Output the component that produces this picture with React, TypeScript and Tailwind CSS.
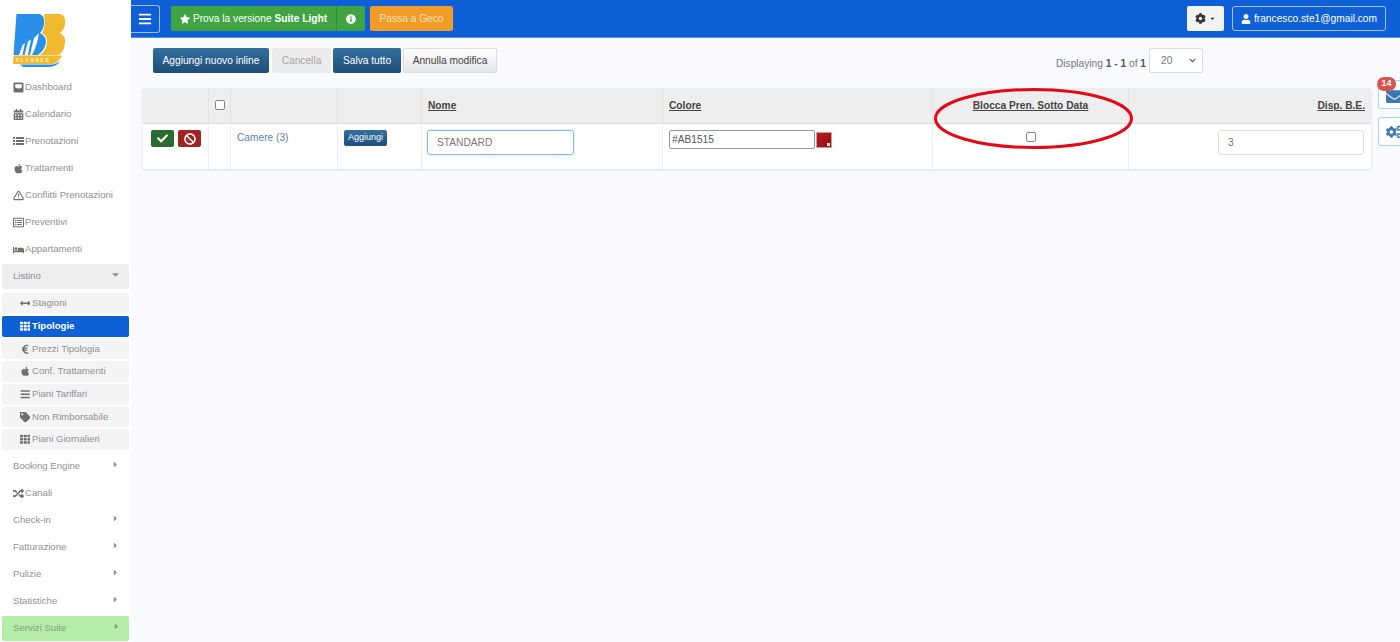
import { ReactNode } from "react"
import {
  FaApple, FaBan, FaBars, FaBed, FaCaretDown, FaCaretRight, FaCalendarAlt, FaCheck, FaChevronDown, FaCog, FaCogs,
  FaEnvelope, FaEuroSign, FaInfoCircle, FaRandom, FaRegListAlt, FaStar, FaTag, FaTh, FaUser, FaArrowsAltH,
} from "react-icons/fa"
import { FiAlertTriangle } from "react-icons/fi"

function Logo() {
  return (
    <svg width="58" height="58" viewBox="0 0 58 58" className="ml-[11px] overflow-visible">
      <path d="M33 2 L49 2 Q55 3 54 11 Q54 17 49 21 Q55 24 54 31 Q53 41 47 43 L29 43 Q36 38 36 29 Q36 24 31 21 Q35 16 33 2 Z" fill="#efba2f" />
      <path d="M5.5 2 L28 2 Q34 3 33 11 Q33 17 29 21 Q35 24 35 30 Q34 38 27 43 L2.5 43 Z" fill="#2a8fe8" />
      <path d="M8 43 L11.5 33 L14 31 L11.5 43 Z M13.5 43 L17 29.5 L20 27.5 L17 43 Z M19 43 L23 26 L28 21 Q26 34 21 43 Z" fill="#fff" />
      <path d="M2.5 43.5 L51 43.5 Q48 50 42 52 L2 52 Z" fill="#efba2f" />
      <path d="M9 52.5 L42 52.5 Q47 51 49 49 Q46 55 36 55 L12 55 Z" fill="#2a8fe8" />
      <text x="5" y="50" fontSize="4.6" fontWeight="700" letterSpacing="1.75" fill="#fdf4d8" fontFamily="Liberation Sans">PLANNER</text>
    </svg>
  )
}

function HddIcon() {
  return (
    <svg width="11" height="11" viewBox="0 0 11 11" fill="currentColor">
      <path d="M1.5 0.5 H9.5 Q10.5 0.5 10.5 1.5 V9 Q10.5 10.5 9 10.5 H2 Q0.5 10.5 0.5 9 V1.5 Q0.5 0.5 1.5 0.5 Z M2.2 2.2 V5.5 Q5.5 7.5 8.8 5.5 V2.2 Z" fillRule="evenodd" />
    </svg>
  )
}

function RowsIcon() {
  return (
    <svg width="11" height="10" viewBox="0 0 11 10" fill="currentColor">
      <path d="M0 0 H2 V2 H0 Z M3 0 H11 V2 H3 Z M0 3 H2 V5 H0 Z M3 3 H11 V5 H3 Z M0 6 H2 V8 H0 Z M3 6 H11 V8 H3 Z" />
    </svg>
  )
}

function NavItem({ icon, label, caret }: { icon?: ReactNode; label: string; caret?: boolean }) {
  return (
    <div className="h-[27px] pl-[13px] pr-[10px] flex items-center text-[#919191]">
      {icon && <span className="w-[11px] mr-[1px] flex justify-center text-[#707070] text-[11px]">{icon}</span>}
      <span className="flex-1 whitespace-nowrap">{label}</span>
      {caret && <FaCaretRight className="text-[#909090] text-[9px] mb-[3px] mr-[1px]" />}
    </div>
  )
}

function SubItem({ icon, label, active }: { icon: ReactNode; label: string; active?: boolean }) {
  return (
    <div
      className={`h-[21px] mb-[1.7px] mx-[2px] pl-[17px] rounded-[2px] flex items-center whitespace-nowrap ${
        active ? "bg-[#0f5fd7] text-white font-bold" : "bg-[#f4f4f4] text-[#919191]"
      }`}
    >
      <span className={`w-[12px] mr-[1px] flex justify-center text-[10.5px] ${active ? "text-white" : "text-[#707070]"}`}>{icon}</span>
      {label}
    </div>
  )
}

function Sidebar() {
  return (
    <aside className="w-[131px] shrink-0 h-[642px] bg-white text-[9.6px] overflow-hidden">
      <div className="h-[74px] pt-[12px]">
        <Logo />
      </div>
      <NavItem icon={<HddIcon />} label="Dashboard" />
      <NavItem icon={<FaCalendarAlt />} label="Calendario" />
      <NavItem icon={<RowsIcon />} label="Prenotazioni" />
      <NavItem icon={<FaApple />} label="Trattamenti" />
      <NavItem icon={<FiAlertTriangle className="stroke-[2.5]" />} label="Conflitti Prenotazioni" />
      <NavItem icon={<FaRegListAlt />} label="Preventivi" />
      <NavItem icon={<FaBed className="text-[12px]" />} label="Appartamenti" />
      <div className="h-[25px] mx-[2px] mt-[1px] mb-[4px] pl-[11px] pr-[8px] rounded-[2px] bg-[#eeeeee] flex items-center justify-between text-[#919191]">
        <span>Listino</span>
        <FaCaretDown className="text-[#909090] text-[11px] mb-[4px]" />
      </div>
      <SubItem icon={<FaArrowsAltH />} label="Stagioni" />
      <SubItem icon={<FaTh />} label="Tipologie" active />
      <SubItem icon={<FaEuroSign />} label="Prezzi Tipologia" />
      <SubItem icon={<FaApple />} label="Conf. Trattamenti" />
      <SubItem icon={<FaBars />} label="Piani Tariffari" />
      <SubItem icon={<FaTag />} label="Non Rimborsabile" />
      <SubItem icon={<FaTh />} label="Piani Giornalieri" />
      <div className="h-[1px]" />
      <NavItem label="Booking Engine" caret />
      <NavItem icon={<FaRandom />} label="Canali" />
      <NavItem label="Check-in" caret />
      <NavItem label="Fatturazione" caret />
      <NavItem label="Pulizie" caret />
      <NavItem label="Statistiche" caret />
      <div className="h-[25px] mt-[1px] mx-[2px] pl-[11px] pr-[8px] rounded-[2px] bg-[#b3eda7] flex items-center justify-between text-[#8a9a8a]">
        <span>Servizi Suite</span>
        <FaCaretRight className="text-[#909090] text-[9px] mb-[3px]" />
      </div>
    </aside>
  )
}

function TopBar() {
  return (
    <header className="h-[38px] bg-[#0f5fd7] border-b border-[#5a93e4] flex items-center pr-[14px] text-[10.2px]">
      <button className="w-[29px] h-[28px] rounded-r-[3px] border border-l-0 border-[#9fc0ef] flex items-center justify-center text-white text-[14px]">
        <FaBars />
      </button>
      <div className="ml-[11px] h-[25px] flex rounded-[2px] bg-[#41a443] text-white overflow-hidden">
        <div className="w-[165px] flex items-center justify-center gap-[3px]">
          <FaStar className="text-[10px]" />
          <span>
            Prova la versione <b>Suite Light</b>
          </span>
        </div>
        <div className="w-[29px] border-l border-[#368c38] flex items-center justify-center text-[10px]">
          <FaInfoCircle />
        </div>
      </div>
      <div className="ml-[5px] w-[83px] h-[25px] rounded-[2px] bg-[#f29c28] text-[#fbe3bf] flex items-center justify-center">Passa a Geco</div>
      <div className="flex-1" />
      <button className="w-[37px] h-[25px] rounded-[2px] bg-[#f3f3f3] text-[#333] flex items-center justify-center gap-[3px] text-[11px]">
        <FaCog />
        <FaCaretDown className="text-[7px]" />
      </button>
      <div className="ml-[8px] w-[154px] h-[25px] rounded-[3px] border border-[#9fc0ef] text-white flex items-center justify-center gap-[3px]">
        <FaUser className="text-[10px]" />
        francesco.ste1@gmail.com
      </div>
    </header>
  )
}

function ActionBar() {
  const blue = "bg-gradient-to-b from-[#33709f] to-[#204d7a] text-white"
  return (
    <div className="h-[50px] flex items-start pt-[10px] pl-[22px] pr-[197px] text-[10.2px]">
      <button className={`w-[116px] h-[25px] rounded-[2px] ${blue}`}>Aggiungi nuovo inline</button>
      <button className="ml-[3px] w-[59px] h-[25px] rounded-[2px] bg-[#ececec] text-[#a5a5a5]">Cancella</button>
      <button className={`ml-[2px] w-[68px] h-[25px] rounded-[2px] ${blue}`}>Salva tutto</button>
      <button className="ml-[2px] w-[94px] h-[25px] rounded-[2px] border border-[#dcdcdc] bg-gradient-to-b from-white to-[#e6e6e6] text-[#444]">Annulla modifica</button>
      <div className="flex-1" />
      <span className="text-[#777] mr-[3px] mt-[8px]">
        Displaying <b className="text-[#555]">1 - 1</b> of <b className="text-[#555]">1</b>
      </span>
      <div className="w-[54px] h-[25px] border border-[#dddddd] rounded-[2px] bg-white flex items-center justify-between pl-[11px] pr-[6px] text-[#777]">
        20
        <FaChevronDown className="text-[7px] text-[#444]" />
      </div>
    </div>
  )
}

function Check() {
  return <span className="block w-[10px] h-[10px] border border-[#888] rounded-[2px] bg-white" />
}

function HeaderCell({ width, align, children }: { width: string; align?: string; children?: ReactNode }) {
  return (
    <div className={`${width} h-full border-r border-[#e3e3e3] last:border-r-0 px-[6px] flex items-center ${align ?? ""}`}>
      {children && <span className="font-bold underline text-[#444]">{children}</span>}
    </div>
  )
}

function Table() {
  return (
    <div className="ml-[12px] w-[1228px] h-[81px] bg-white rounded-[3px] shadow-[0_1px_3px_rgba(0,0,0,0.12)] text-[10.2px] overflow-hidden">
      <div className="h-[36px] flex bg-[#eeeeee] border-b border-[#dddddd]">
        <HeaderCell width="w-[66px]" />
        <div className="w-[22px] h-full border-r border-[#e3e3e3] flex justify-center pt-[12px]">
          <Check />
        </div>
        <HeaderCell width="w-[107px]" />
        <HeaderCell width="w-[84px]" />
        <HeaderCell width="w-[241px]">Nome</HeaderCell>
        <HeaderCell width="w-[270px]">Colore</HeaderCell>
        <HeaderCell width="w-[196px]" align="justify-center">Blocca Pren. Sotto Data</HeaderCell>
        <HeaderCell width="flex-1" align="justify-end">Disp. B.E.</HeaderCell>
      </div>
      <div className="h-[45px] flex">
        <div className="w-[66px] border-r border-[#eeeeee] flex gap-[4px] pl-[8px] pt-[6px]">
          <span className="w-[23px] h-[17px] rounded-[2px] bg-[#2b6b2f] text-white flex items-center justify-center text-[11px]"><FaCheck /></span>
          <span className="w-[23px] h-[17px] rounded-[2px] bg-[#a32323] text-white flex items-center justify-center text-[12px]"><FaBan /></span>
        </div>
        <div className="w-[22px] border-r border-[#eeeeee]" />
        <div className="w-[107px] border-r border-[#eeeeee] pl-[6px] pt-[6px] text-[#5b82ab]">Camere (3)</div>
        <div className="w-[84px] border-r border-[#eeeeee] pl-[6px] pt-[6px]">
          <span className="w-[43px] h-[16px] rounded-[2px] bg-gradient-to-b from-[#33709f] to-[#204d7a] text-white text-[9px] flex items-center justify-center">Aggiungi</span>
        </div>
        <div className="w-[241px] border-r border-[#eeeeee] pl-[5px] pt-[6px]">
          <div className="w-[147px] h-[25px] rounded-[3px] border border-[#8ab8e6] shadow-[0_0_2px_rgba(102,175,233,0.6)] pl-[9px] flex items-center text-[#777]">STANDARD</div>
        </div>
        <div className="w-[270px] border-r border-[#eeeeee] pl-[6px] pt-[6px] flex items-start">
          <div className="w-[146px] h-[19px] rounded-[2px] border border-[#999] pl-[2px] flex items-center text-[#555]">#AB1515</div>
          <span className="relative ml-[1px] mt-[2px] w-[16px] h-[16px] border border-[#c4a0a0] bg-gradient-to-br from-[#c01a1a] to-[#8c1010]">
            <span className="absolute right-[1px] bottom-[1px] w-[3px] h-[3px] bg-[#f3dede]" />
          </span>
        </div>
        <div className="w-[196px] border-r border-[#eeeeee] flex justify-center pt-[8px]">
          <Check />
        </div>
        <div className="flex-1 pl-[89px] pt-[6px]">
          <div className="w-[146px] h-[25px] rounded-[3px] border border-[#dddddd] pl-[9px] flex items-center text-[#777]">3</div>
        </div>
      </div>
    </div>
  )
}

export default function App() {
  return (
    <div className="relative h-[642px] w-[1400px] overflow-hidden flex bg-[#f8fafd] font-['Liberation_Sans',Arial,sans-serif]">
      <Sidebar />
      <main className="flex-1">
        <TopBar />
        <ActionBar />
        <Table />
      </main>
      {/* side tabs on the right edge, over the content */}
      <div className="absolute left-[1378px] top-[80px] w-[30px] h-[29px] border border-[#a8d4e6] rounded-[3px] bg-white flex items-center pt-[3px] pl-[7px] text-[#3b7ab0] text-[17px]">
        <FaEnvelope />
      </div>
      <span className="absolute left-[1377px] top-[77px] w-[19px] h-[14px] rounded-full bg-[#d9534f] text-white text-[9px] font-bold flex items-center justify-center">14</span>
      <div className="absolute left-[1378px] top-[117px] w-[30px] h-[29px] border border-[#a8d4e6] rounded-[3px] bg-white flex items-center pl-[7px] text-[#3b7ab0] text-[16px]">
        <FaCogs />
      </div>
      {/* red hand-drawn ellipse annotation */}
      <svg className="absolute left-[930px] top-[85px]" width="206" height="68" viewBox="0 0 206 68" fill="none">
        <ellipse cx="103.5" cy="33.5" rx="98" ry="29" stroke="#e30a17" strokeWidth="3" />
      </svg>
    </div>
  )
}
